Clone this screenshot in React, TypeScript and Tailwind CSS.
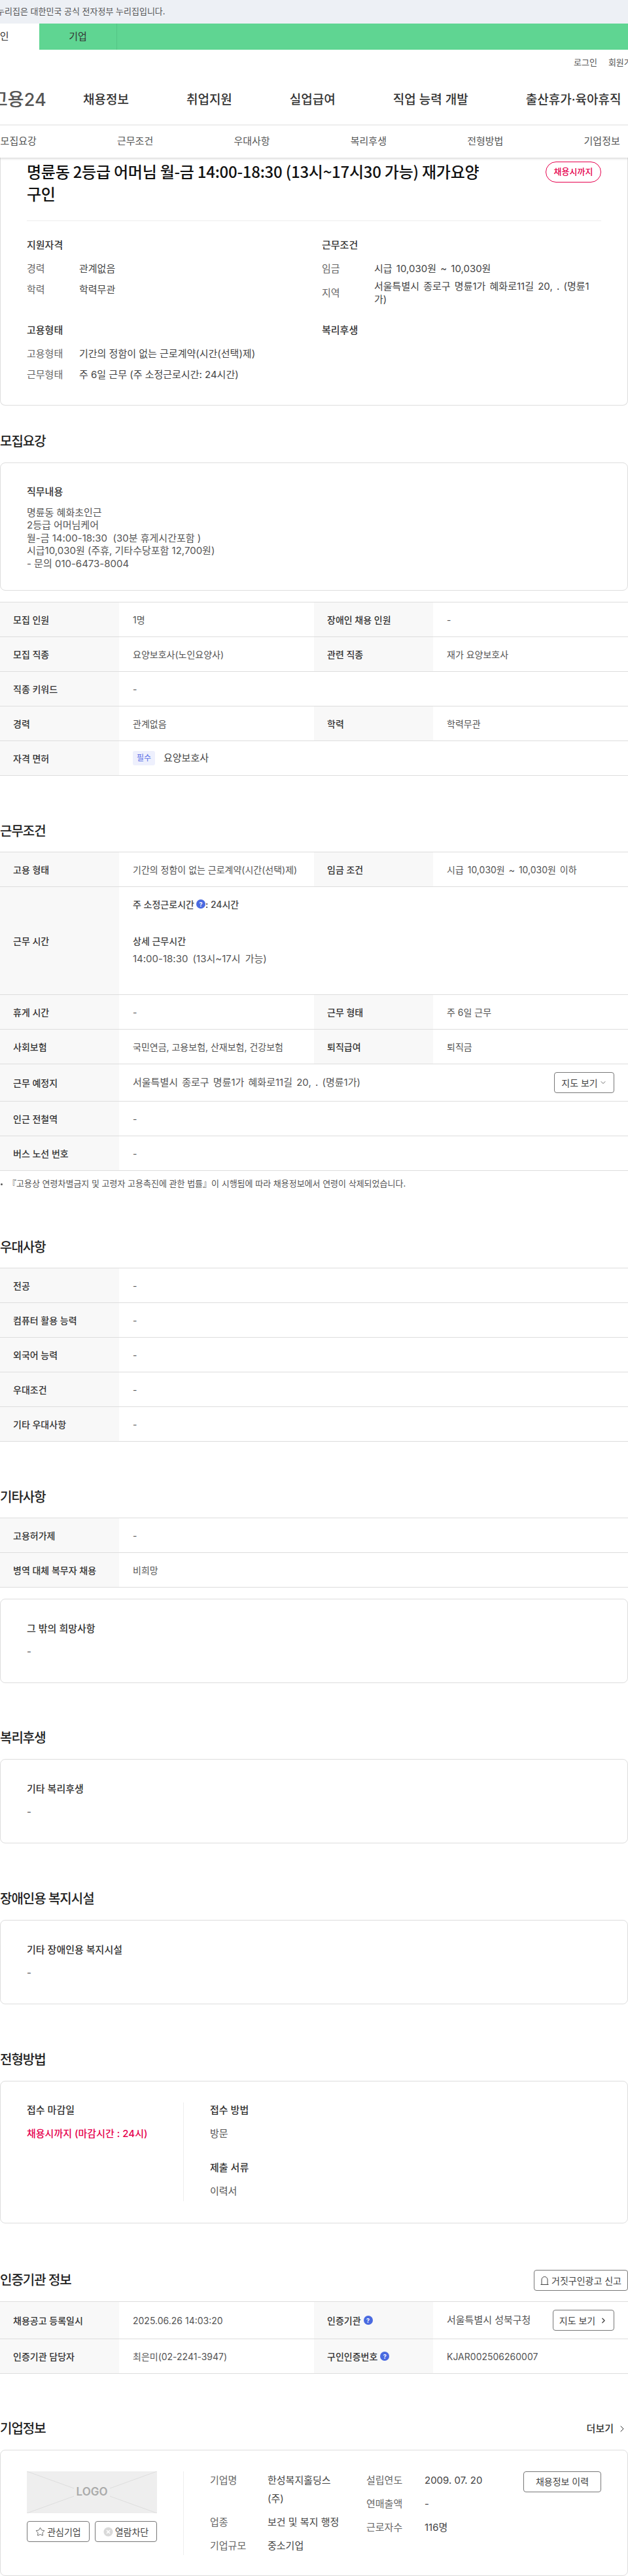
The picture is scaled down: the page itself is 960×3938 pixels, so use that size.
import React from "react";
import { ChevronDown, ChevronRight, Star } from "lucide-react";

function Help() {
  return (
    <span className="inline-flex h-[14px] w-[14px] shrink-0 items-center justify-center rounded-full bg-[#4a6ae0] text-[9px] font-bold leading-none text-white">?</span>
  );
}

function H2({ children, className = "" }: { children: React.ReactNode; className?: string }) {
  return <h2 className={"h-[28px] text-[20px] font-medium leading-[28px] text-[#222] tracking-[-0.05em] " + className}>{children}</h2>;
}

function L({ children, className = "" }: { children: React.ReactNode; className?: string }) {
  return <div className={"flex items-center gap-[4px] bg-[#f8f8f8] pl-[20px] text-[14px] font-medium text-[#333] " + className}>{children}</div>;
}

function V({ children, className = "" }: { children: React.ReactNode; className?: string }) {
  return <div className={"flex items-center pl-[21px] text-[14px] text-[#555] " + className}>{children}</div>;
}

function Row({ cells, h = "h-[53px]" }: { cells: [React.ReactNode, React.ReactNode][]; h?: string }) {
  if (cells.length === 1) {
    return (
      <div className={"grid grid-cols-[182px_778px] border-b border-[#ddd] " + h}>
        <L>{cells[0][0]}</L>
        <V>{cells[0][1]}</V>
      </div>
    );
  }
  return (
    <div className={"grid grid-cols-[182px_298px_182px_298px] border-b border-[#ddd] " + h}>
      <L>{cells[0][0]}</L>
      <V>{cells[0][1]}</V>
      <L>{cells[1][0]}</L>
      <V>{cells[1][1]}</V>
    </div>
  );
}

function Table({ children, className = "" }: { children: React.ReactNode; className?: string }) {
  return <div className={"border-t border-[#ddd] " + className}>{children}</div>;
}

function SmallCard({ label, className = "" }: { label: string; className?: string }) {
  return (
    <div className={"h-[129px] rounded-[8px] border border-[#ddd] px-[40px] pt-[33px] " + className}>
      <div className="text-[15px] font-medium leading-[24px] text-[#333]">{label}</div>
      <div className="mt-[13px] text-[15px] leading-[20px] text-[#555]">-</div>
    </div>
  );
}

function Btn({ children, className = "" }: { children: React.ReactNode; className?: string }) {
  return (
    <div className={"flex items-center justify-center rounded-[4px] border border-[#777] bg-white text-[14px] text-[#444] " + className}>{children}</div>
  );
}

function KV({ k, children, kw = "w-[80px]" }: { k: string; children: React.ReactNode; kw?: string }) {
  return (
    <div className="flex items-center text-[15px]">
      <div className={"shrink-0 text-[#666] " + kw}>{k}</div>
      <div className="text-[#444]">{children}</div>
    </div>
  );
}

function H3({ children }: { children: React.ReactNode }) {
  return <div className="h-[22px] text-[15px] font-medium leading-[22px] text-[#333]">{children}</div>;
}

function Header() {
  return (
    <div className="relative z-10 bg-white shadow-[0_2px_3px_rgba(0,0,0,0.14)]">
      <div className="flex h-[36px] items-center overflow-hidden bg-[#edf0f5] text-[13px] text-[#555]">
        <span className="-ml-[5px] whitespace-nowrap">누리집은 대한민국 공식 전자정부 누리집입니다.</span>
      </div>
      <div className="flex h-[40px] bg-[#5fd592] text-[15px] text-[#333]">
        <div className="flex w-[60px] items-center overflow-hidden bg-white">
          <span className="-ml-[14px] whitespace-nowrap">개인</span>
        </div>
        <div className="flex w-[119px] items-center justify-center border-r border-[#55c585]">기업</div>
      </div>
      <div className="flex h-[40px] items-center gap-[17px] overflow-hidden pl-[877px] text-[13px] text-[#555]">
        <span className="whitespace-nowrap">로그인</span>
        <span className="whitespace-nowrap">회원가입</span>
      </div>
      <div className="flex h-[76px] items-center overflow-hidden border-b-2 border-[#eee] text-[19px] font-medium text-[#333]">
        <span className="-ml-[13px] mr-[54px] w-[86px] shrink-0 whitespace-nowrap text-[27px] font-medium text-[#555]">고용24</span>
        <div className="flex shrink-0 gap-[88px] whitespace-nowrap">
          <span>채용정보</span>
          <span>취업지원</span>
          <span>실업급여</span>
          <span>직업 능력 개발</span>
          <span>출산휴가·육아휴직</span>
        </div>
      </div>
      <div className="flex h-[49px] items-center overflow-hidden text-[15px] text-[#555]">
        <div className="-ml-[61px] flex shrink-0">
          {["모집요강", "근무조건", "우대사항", "복리후생", "전형방법", "기업정보"].map((t) => (
            <span key={t} className="w-[178.4px] text-center">{t}</span>
          ))}
        </div>
      </div>
    </div>
  );
}

function Summary() {
  return (
    <div className="h-[379px] rounded-b-[8px] border-x border-b border-[#ddd] px-[40px] pt-[4px]">
      <div className="flex justify-between">
        <h1 className="w-[710px] font-['Noto_Sans_CJK_KR',sans-serif] text-[24px] font-medium leading-[34px] tracking-[-0.01em] text-[#111]">
          명륜동 2등급 어머님 월-금 14:00-18:30 (13시~17시30 가능) 재가요양 구인
        </h1>
        <div className="mt-[2px] flex h-[32px] w-[85px] items-center justify-center rounded-full border border-[#e6004d] text-[13px] font-medium text-[#e6004d]">채용시까지</div>
      </div>
      <div className="mt-[24px] border-t border-[#eee]" />
      <div className="mt-[26px] grid grid-cols-[451px_1fr] auto-rows-[130px]">
        <div>
          <H3>지원자격</H3>
          <div className="mt-[14px] flex flex-col gap-[10px] leading-[22px]">
            <KV k="경력">관계없음</KV>
            <KV k="학력">학력무관</KV>
          </div>
        </div>
        <div>
          <H3>근무조건</H3>
          <div className="mt-[14px] flex flex-col gap-[6px] leading-[22px]">
            <KV k="임금"><span className="[word-spacing:2px]">시급 10,030원 ~ 10,030원</span></KV>
            <KV k="지역">
              <div className="w-[340px] leading-[19.5px] [word-spacing:2px]">서울특별시 종로구 명륜1가 혜화로11길 20, . (명륜1가)</div>
            </KV>
          </div>
        </div>
        <div>
          <H3>고용형태</H3>
          <div className="mt-[14px] flex flex-col gap-[10px] leading-[22px]">
            <KV k="고용형태">기간의 정함이 없는 근로계약(시간(선택)제)</KV>
            <KV k="근무형태">주 6일 근무 (주 소정근로시간: 24시간)</KV>
          </div>
        </div>
        <div>
          <H3>복리후생</H3>
        </div>
      </div>
    </div>
  );
}

function LogoBox() {
  return (
    <div className="relative flex h-[64px] w-[199px] items-center justify-center bg-[#eee]">
      <svg className="absolute inset-0" width="199" height="64" viewBox="0 0 199 64" fill="none" stroke="#ddd" strokeWidth="1">
        <path d="M0 0 L72 26 M199 0 L127 26 M0 64 L72 38 M199 64 L127 38" />
      </svg>
      <span className="relative text-[17px] font-semibold text-[#aaa]">LOGO</span>
    </div>
  );
}

export default function App() {
  return (
    <div className="h-[3938px] w-[960px] overflow-hidden bg-white font-['Inter','Noto_Sans_CJK_KR',sans-serif]">
      <Header />
      <Summary />

      <H2 className="mt-[41px]">모집요강</H2>
      <div className="mt-[18px] h-[196px] rounded-[8px] border border-[#ddd] px-[40px] pt-[32px]">
        <div className="text-[15px] font-medium leading-[24px] text-[#333]">직무내용</div>
        <div className="mt-[10px] text-[15px] leading-[19.4px] text-[#555]">
          <div>명륜동 혜화초인근</div>
          <div>2등급 어머님케어</div>
          <div>월-금 14:00-18:30&nbsp; (30분 휴게시간포함 )</div>
          <div>시급10,030원 (주휴, 기타수당포함 12,700원)</div>
          <div>- 문의 010-6473-8004</div>
        </div>
      </div>
      <Table className="mt-[17px]">
        <Row cells={[["모집 인원", "1명"], ["장애인 채용 인원", "-"]]} />
        <Row cells={[["모집 직종", "요양보호사(노인요양사)"], ["관련 직종", "재가 요양보호사"]]} />
        <Row cells={[["직종 키워드", "-"]]} />
        <Row cells={[["경력", "관계없음"], ["학력", "학력무관"]]} />
        <Row
          cells={[[
            "자격 면허",
            <span className="flex items-center gap-[13px] text-[15px] text-[#444]">
              <span className="flex h-[22px] w-[34px] items-center justify-center rounded-[3px] bg-[#eef0fd] text-[12px] text-[#5a6fe6]">필수</span>
              요양보호사
            </span>,
          ]]}
        />
      </Table>

      <H2 className="mt-[71px]">근무조건</H2>
      <Table className="mt-[17px]">
        <Row cells={[["고용 형태", "기간의 정함이 없는 근로계약(시간(선택)제)"], ["임금 조건", <span className="[word-spacing:2px]">시급 10,030원 ~ 10,030원 이하</span>]]} />
        <div className="grid h-[165px] grid-cols-[182px_778px] border-b border-[#ddd]">
          <L>근무 시간</L>
          <div className="pl-[21px] pt-[16px] text-[#444]">
            <div className="flex h-[20px] items-center gap-[3px] text-[14px] font-medium">
              주 소정근로시간 <Help /><span className="-ml-[3px]">: 24시간</span>
            </div>
            <div className="mt-[36px] flex h-[20px] items-center text-[14px] font-medium">상세 근무시간</div>
            <div className="mt-[8px] text-[15px] leading-[20px] text-[#555] [word-spacing:3px]">14:00-18:30 (13시~17시 가능)</div>
          </div>
        </div>
        <Row cells={[["휴게 시간", "-"], ["근무 형태", "주 6일 근무"]]} />
        <Row cells={[["사회보험", "국민연금, 고용보험, 산재보험, 건강보험"], ["퇴직급여", "퇴직금"]]} />
        <div className="grid h-[57px] grid-cols-[182px_778px] border-b border-[#ddd]">
          <L>근무 예정지</L>
          <V className="justify-between pr-[21px] text-[15px] [word-spacing:2px]">
            서울특별시 종로구 명륜1가 혜화로11길 20, . (명륜1가)
            <Btn className="h-[32px] w-[92px] gap-[2px] text-[13px] [word-spacing:0]">지도 보기 <ChevronDown size={12} strokeWidth={1.5} /></Btn>
          </V>
        </div>
        <Row cells={[["인근 전철역", "-"]]} />
        <Row cells={[["버스 노선 번호", "-"]]} />
      </Table>
      <div className="mt-[10px] flex h-[20px] items-center whitespace-nowrap text-[13px] text-[#555]">
        <span className="mr-[8px] ml-[1px] h-[3px] w-[3px] rounded-full bg-[#555]" />
        『고용상 연령차별금지 및 고령자 고용촉진에 관한 법률』이 시행됨에 따라 채용정보에서 연령이 삭제되었습니다.
      </div>

      <H2 className="mt-[73px]">우대사항</H2>
      <Table className="mt-[17px]">
        <Row cells={[["전공", "-"]]} />
        <Row cells={[["컴퓨터 활용 능력", "-"]]} />
        <Row cells={[["외국어 능력", "-"]]} />
        <Row cells={[["우대조건", "-"]]} />
        <Row cells={[["기타 우대사항", "-"]]} />
      </Table>

      <H2 className="mt-[71px]">기타사항</H2>
      <Table className="mt-[17px]">
        <Row cells={[["고용허가제", "-"]]} />
        <Row cells={[["병역 대체 복무자 채용", "비희망"]]} />
      </Table>
      <SmallCard label="그 밖의 희망사항" className="mt-[17px]" />

      <H2 className="mt-[70px]">복리후생</H2>
      <SmallCard label="기타 복리후생" className="mt-[18px]" />

      <H2 className="mt-[71px]">장애인용 복지시설</H2>
      <SmallCard label="기타 장애인용 복지시설" className="mt-[18px]" />

      <H2 className="mt-[71px]">전형방법</H2>
      <div className="mt-[18px] h-[218px] rounded-[8px] border border-[#ddd] px-[40px] pt-[32px]">
        <div className="flex h-[151px]">
          <div className="w-[239px]">
            <div className="text-[15px] font-medium leading-[24px] text-[#333]">접수 마감일</div>
            <div className="mt-[12px] text-[15px] font-medium leading-[24px] text-[#e6004d]">채용시까지 (마감시간 : 24시)</div>
          </div>
          <div className="border-l border-[#eee] pl-[40px]">
            <div className="text-[15px] font-medium leading-[24px] text-[#333]">접수 방법</div>
            <div className="mt-[12px] text-[15px] leading-[24px] text-[#555]">방문</div>
            <div className="mt-[28px] text-[15px] font-medium leading-[24px] text-[#333]">제출 서류</div>
            <div className="mt-[12px] text-[15px] leading-[24px] text-[#555]">이력서</div>
          </div>
        </div>
      </div>

      <div className="mt-[71px] flex h-[32px] items-center justify-between">
        <H2>인증기관 정보</H2>
        <Btn className="h-[32px] w-[144px] gap-[4px] text-[14px]">
          <svg width="13" height="15" viewBox="0 0 13 15" fill="none" stroke="#444" strokeWidth="1">
            <path d="M2 13 V6 a4.5 4.5 0 0 1 9 0 V13 M0.5 13.5 H12.5" />
          </svg>
          거짓구인광고 신고
        </Btn>
      </div>
      <Table className="mt-[16px]">
        <div className="grid h-[57px] grid-cols-[182px_298px_182px_298px] border-b border-[#ddd]">
          <L>채용공고 등록일시</L>
          <V>2025.06.26 14:03:20</V>
          <L>인증기관 <Help /></L>
          <V className="justify-between pr-[21px] text-[15px]">
            서울특별시 성북구청
            <Btn className="h-[32px] w-[94px] gap-[6px] text-[14px]">지도 보기 <ChevronRight size={13} strokeWidth={2.5} /></Btn>
          </V>
        </div>
        <div className="grid h-[53px] grid-cols-[182px_298px_182px_298px] border-b border-[#ddd]">
          <L>인증기관 담당자</L>
          <V>최은미(02-2241-3947)</V>
          <L>구인인증번호 <Help /></L>
          <V>KJAR002506260007</V>
        </div>
      </Table>

      <div className="mt-[70px] flex h-[28px] items-center justify-between">
        <H2>기업정보</H2>
        <div className="flex items-center gap-[5px] pr-[1px] text-[15px] font-medium text-[#333]">
          더보기 <ChevronRight size={16} strokeWidth={1.5} />
        </div>
      </div>
      <div className="mt-[18px] flex h-[193px] rounded-[8px] border border-[#ddd] px-[40px] pt-[32px]">
        <div className="w-[199px] shrink-0">
          <LogoBox />
          <div className="mt-[12px] flex justify-between">
            <Btn className="h-[32px] w-[96px] gap-[3px] text-[14px]"><Star size={15} strokeWidth={1.3} />관심기업</Btn>
            <Btn className="h-[32px] w-[95px] gap-[3px] text-[14px]">
              <svg width="15" height="15" viewBox="0 0 15 15">
                <circle cx="7.5" cy="7.5" r="7" fill="#d9d9d9" />
                <path d="M5 5 L10 10 M10 5 L5 10" stroke="#fff" strokeWidth="1.5" />
              </svg>
              열람차단
            </Btn>
          </div>
        </div>
        <div className="ml-[40px] flex h-[128px] flex-1 border-l border-[#eee] pl-[40px] text-[15px] leading-[28px]">
          <div className="flex w-[239px] flex-col gap-[8px]">
            <div className="flex"><span className="w-[88px] shrink-0 text-[#666]">기업명</span><span className="w-[115px] text-[#444]">한성복지홀딩스(주)</span></div>
            <div className="flex"><span className="w-[88px] shrink-0 text-[#666]">업종</span><span className="whitespace-nowrap text-[#444]">보건 및 복지 행정</span></div>
            <div className="flex"><span className="w-[88px] shrink-0 text-[#666]">기업규모</span><span className="text-[#444]">중소기업</span></div>
          </div>
          <div className="flex w-[240px] flex-col gap-[8px]">
            <div className="flex"><span className="w-[89px] shrink-0 text-[#666]">설립연도</span><span className="text-[#444]">2009. 07. 20</span></div>
            <div className="flex"><span className="w-[89px] shrink-0 text-[#666]">연매출액</span><span className="text-[#444]">-</span></div>
            <div className="flex"><span className="w-[89px] shrink-0 text-[#666]">근로자수</span><span className="text-[#444]">116명</span></div>
          </div>
          <Btn className="h-[32px] w-[119px] text-[14px]">채용정보 이력</Btn>
        </div>
      </div>
    </div>
  );
}
